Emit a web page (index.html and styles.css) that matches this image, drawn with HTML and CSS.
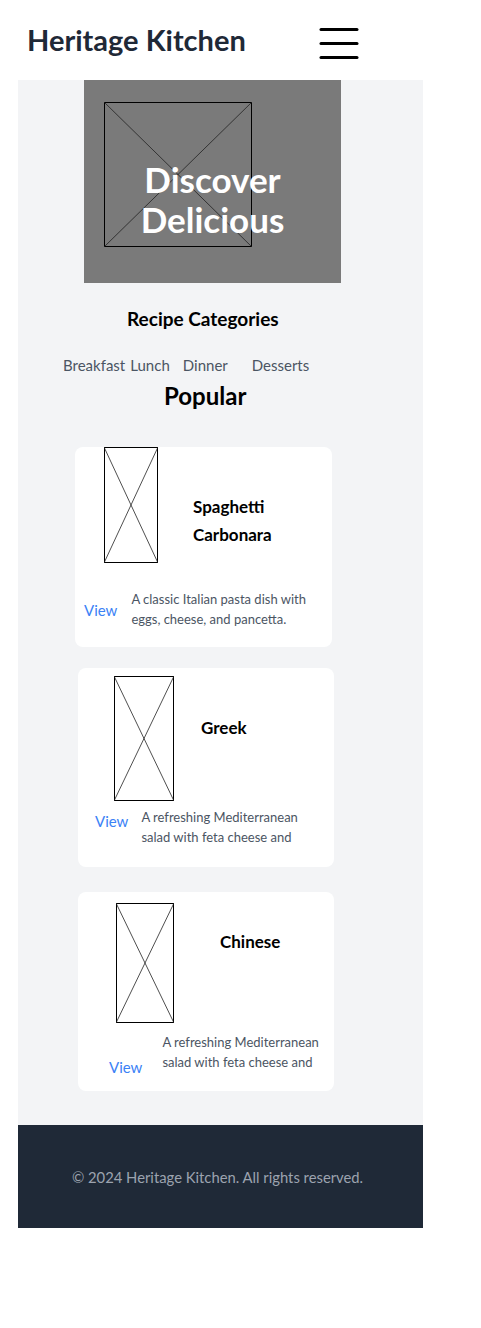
FILE: index.html
```html
<!DOCTYPE html>
<html lang="en">
<head>
<meta charset="utf-8">
<title>Heritage Kitchen</title>
<link rel="stylesheet" href="styles.css">
</head>
<body>
<header class="site-header">
  <h1 class="brand">Heritage Kitchen</h1>
  <button class="menu-btn" aria-label="Menu">
    <svg width="40" height="34" viewBox="0 0 40 34"><g stroke="#000" stroke-width="3" stroke-linecap="round"><line x1="2" y1="2.5" x2="38" y2="2.5"/><line x1="2" y1="16.5" x2="38" y2="16.5"/><line x1="2" y1="30.5" x2="38" y2="30.5"/></g></svg>
  </button>
</header>
<main class="main">
  <section class="hero">
    <svg class="ph hero-img" width="148" height="145" viewBox="0 0 148 145" preserveAspectRatio="none"><rect x="0.5" y="0.5" width="147" height="144" fill="none" stroke="#000"/><line x1="0" y1="0" x2="148" y2="145" stroke="#222" stroke-width="0.8"/><line x1="148" y1="0" x2="0" y2="145" stroke="#222" stroke-width="0.8"/></svg>
    <h2 class="hero-title">Discover<br>Delicious</h2>
  </section>
  <h3 class="section-title">Recipe Categories</h3>
  <nav class="cats">
    <a class="cat">Breakfast</a><a class="cat cat-lunch">Lunch</a><a class="cat cat-dinner">Dinner</a><a class="cat cat-dess">Desserts</a>
  </nav>
  <h2 class="popular">Popular</h2>

  <article class="card card-1">
    <div class="card-top">
      <svg class="ph" width="54" height="116" viewBox="0 0 54 116" preserveAspectRatio="none"><rect x="0.5" y="0.5" width="53" height="115" fill="none" stroke="#000"/><line x1="0" y1="0" x2="54" y2="116" stroke="#222" stroke-width="0.8"/><line x1="54" y1="0" x2="0" y2="116" stroke="#222" stroke-width="0.8"/></svg>
      <h4 class="card-title">Spaghetti<br>Carbonara</h4>
    </div>
    <div class="card-bottom">
      <a class="view">View</a>
      <p class="desc">A classic Italian pasta dish with<br>eggs, cheese, and pancetta.</p>
    </div>
  </article>

  <article class="card card-2">
    <div class="card-top">
      <svg class="ph" width="60" height="125" viewBox="0 0 60 125" preserveAspectRatio="none"><rect x="0.5" y="0.5" width="59" height="124" fill="none" stroke="#000"/><line x1="0" y1="0" x2="60" y2="125" stroke="#222" stroke-width="0.8"/><line x1="60" y1="0" x2="0" y2="125" stroke="#222" stroke-width="0.8"/></svg>
      <h4 class="card-title">Greek</h4>
    </div>
    <div class="card-bottom">
      <a class="view">View</a>
      <p class="desc">A refreshing Mediterranean<br>salad with feta cheese and</p>
    </div>
  </article>

  <article class="card card-3">
    <div class="card-top">
      <svg class="ph" width="58" height="120" viewBox="0 0 58 120" preserveAspectRatio="none"><rect x="0.5" y="0.5" width="57" height="119" fill="none" stroke="#000"/><line x1="0" y1="0" x2="58" y2="120" stroke="#222" stroke-width="0.8"/><line x1="58" y1="0" x2="0" y2="120" stroke="#222" stroke-width="0.8"/></svg>
      <h4 class="card-title">Chinese</h4>
    </div>
    <div class="card-bottom">
      <a class="view">View</a>
      <p class="desc">A refreshing Mediterranean<br>salad with feta cheese and</p>
    </div>
  </article>
</main>
<footer class="footer">
  <p>© 2024 Heritage Kitchen. All rights reserved.</p>
</footer>
</body>
</html>
```

FILE: styles.css
```css
* { box-sizing: border-box; }
html, body { margin: 0; padding: 0; background: #fff; }
body { font-family: "Lato", "Liberation Sans", sans-serif; color: #000; }
h1, h2, h3, h4, p { margin: 0; }
a { text-decoration: none; }

.site-header {
  height: 80px;
  display: flex;
  align-items: center;
  padding-left: 27px;
}
.brand {
  font-size: 29px;
  font-weight: 700;
  color: #1f2937;
  width: 292px;
  line-height: 1;
  margin-top: -2px;
}
.menu-btn {
  border: 0; padding: 0; background: none;
  display: block;
  margin-top: 8px;
}
.menu-btn svg { display: block; }

.main {
  margin-left: 18px;
  width: 405px;
  background: #f3f4f6;
  padding-bottom: 34px;
}

.hero {
  position: relative;
  margin-left: 66px;
  width: 257px;
  height: 203px;
  background: #7a7a7a;
  padding: 22px 0 0 20px;
}
.ph { display: block; flex: none; }
.hero-title {
  position: absolute;
  left: 0; right: 0; top: 79px;
  text-align: center;
  color: #fff;
  font-size: 35px;
  line-height: 40px;
  font-weight: 700;
}

.section-title {
  margin: 24px 0 0 0;
  padding-left: 109px;
  font-size: 19px;
  font-weight: 700;
  line-height: 24px;
}
.cats {
  display: flex;
  padding-left: 45px;
  margin-top: 24px;
  line-height: 20px;
}
.cat { font-size: 15px; color: #4b5563; }
.cat-lunch { margin-left: 5px; }
.cat-dinner { margin-left: 13px; }
.cat-dess { margin-left: 24px; }

.popular {
  padding-left: 146px;
  font-size: 24px;
  font-weight: 700;
  line-height: 30px;
  margin-top: 6px;
}

.card {
  background: #fff;
  border-radius: 8px;
}
.card-top { display: flex; align-items: flex-start; }
.card-bottom { display: flex; align-items: center; }
.card-title {
  font-size: 17px;
  font-weight: 700;
  line-height: 28px;
}
.view { font-size: 15px; color: #3b82f6; line-height: 20px; }
.desc { font-size: 13px; color: #4b5563; line-height: 19.5px; }

.card-1 { margin: 36px 0 0 57px; width: 257px; height: 200px; }
.card-1 .card-top { padding-left: 29px; }
.card-1 .card-title { margin: 46px 0 0 35px; }
.card-1 .card-bottom { padding: 27px 0 0 9px; }
.card-1 .desc { margin-left: 14px; }

.card-2 { margin: 21px 0 0 60px; width: 256px; height: 199px; }
.card-2 .card-top { padding: 8px 0 0 36px; }
.card-2 .card-title { margin: 38px 0 0 27px; }
.card-2 .card-bottom { padding: 7px 0 0 17px; align-items: flex-start; }
.card-2 .view { margin-top: 3px; }
.card-2 .desc { margin-left: 13px; }

.card-3 { margin: 25px 0 0 60px; width: 256px; height: 199px; }
.card-3 .card-top { padding: 11px 0 0 38px; }
.card-3 .card-title { margin: 25px 0 0 46px; }
.card-3 .card-bottom { padding: 10px 0 0 31px; align-items: flex-start; }
.card-3 .view { margin-top: 24px; }
.card-3 .desc { margin-left: 20px; }

.footer {
  margin-left: 18px;
  width: 405px;
  height: 103px;
  background: #1f2937;
  display: flex;
  align-items: center;
  justify-content: center;
}
.footer p { color: #9ca3af; font-size: 14.8px; line-height: 20px; margin-right: 6px; }
```
